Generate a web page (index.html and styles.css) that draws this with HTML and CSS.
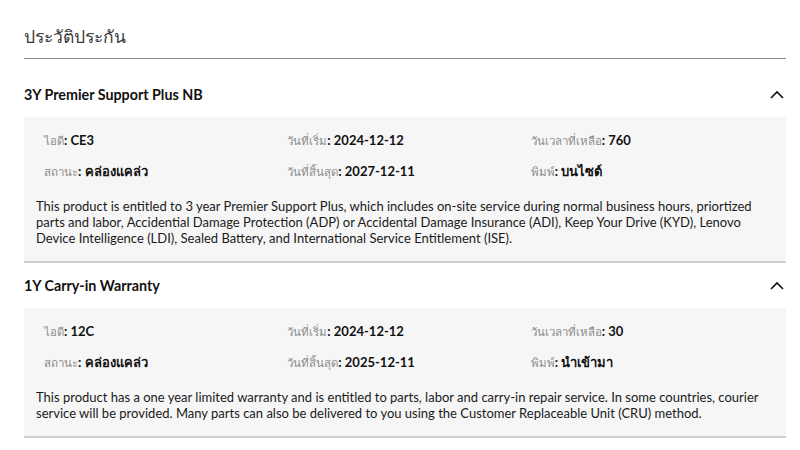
FILE: index.html
```html
<!DOCTYPE html>
<html lang="th">
<head>
<meta charset="utf-8">
<link rel="stylesheet" href="styles.css">
</head>
<body>
<div class="page">
  <h1 class="title">ประวัติประกัน</h1>

  <section class="warranty first">
    <div class="wheader">
      <span class="wname">3Y Premier Support Plus NB</span>
      <svg class="chev" width="14" height="9" viewBox="0 0 14 9"><path d="M1 8 L7 2 L13 8" fill="none" stroke="#111" stroke-width="1.6"/></svg>
    </div>
    <div class="wbody">
      <div class="grid">
        <div class="item"><span class="lbl">ไอดี</span><span class="val">: CE3</span></div>
        <div class="item"><span class="lbl">วันที่เริ่ม</span><span class="val">: 2024-12-12</span></div>
        <div class="item"><span class="lbl">วันเวลาที่เหลือ</span><span class="val">: 760</span></div>
        <div class="item"><span class="lbl">สถานะ</span><span class="val">: คล่องแคล่ว</span></div>
        <div class="item"><span class="lbl">วันที่สิ้นสุด</span><span class="val">: 2027-12-11</span></div>
        <div class="item"><span class="lbl">พิมพ์</span><span class="val">: บนไซต์</span></div>
      </div>
      <p class="desc">This product is entitled to 3 year Premier Support Plus, which includes on-site service during normal business hours, priortized parts and labor, Accidential Damage Protection (ADP) or Accidental Damage Insurance (ADI), Keep Your Drive (KYD), Lenovo Device Intelligence (LDI), Sealed Battery, and International Service Entitlement (ISE).</p>
    </div>
  </section>

  <section class="warranty">
    <div class="wheader">
      <span class="wname">1Y Carry-in Warranty</span>
      <svg class="chev" width="14" height="9" viewBox="0 0 14 9"><path d="M1 8 L7 2 L13 8" fill="none" stroke="#111" stroke-width="1.6"/></svg>
    </div>
    <div class="wbody">
      <div class="grid">
        <div class="item"><span class="lbl">ไอดี</span><span class="val">: 12C</span></div>
        <div class="item"><span class="lbl">วันที่เริ่ม</span><span class="val">: 2024-12-12</span></div>
        <div class="item"><span class="lbl">วันเวลาที่เหลือ</span><span class="val">: 30</span></div>
        <div class="item"><span class="lbl">สถานะ</span><span class="val">: คล่องแคล่ว</span></div>
        <div class="item"><span class="lbl">วันที่สิ้นสุด</span><span class="val">: 2025-12-11</span></div>
        <div class="item"><span class="lbl">พิมพ์</span><span class="val">: นำเข้ามา</span></div>
      </div>
      <p class="desc">This product has a one year limited warranty and is entitled to parts, labor and carry-in repair service. In some countries, courier service will be provided. Many parts can also be delivered to you using the Customer Replaceable Unit (CRU) method.</p>
    </div>
  </section>
</div>
</body>
</html>
```

FILE: styles.css
```css
html, body {
  margin: 0;
  padding: 0;
  background: #fff;
}
body {
  font-family: Lato, "Noto Sans", "DejaVu Sans", sans-serif;
  color: #1a1a1a;
}
.page {
  padding: 0 14px 0 24px;
}
.title {
  margin: 23px 0 0;
  font-size: 17.5px;
  line-height: 28px;
  font-weight: 400;
  color: #3a3a3a;
  padding-bottom: 7px;
  border-bottom: 1px solid #8a8a8a;
}
.warranty.first {
  margin-top: 13px;
}
.wheader {
  height: 45px;
  display: flex;
  align-items: center;
  justify-content: space-between;
}
.wname {
  font-size: 14.3px;
  font-weight: 700;
  color: #111;
}
.chev {
  margin-right: 2px;
}
.wbody {
  background: #f6f6f6;
  border-bottom: 2px solid #cfcfcf;
  padding: 12px 12px 15px 12px;
}
.grid {
  display: grid;
  grid-template-columns: repeat(3, 1fr);
  row-gap: 11px;
  padding-left: 8px;
}
.item {
  line-height: 20px;
  height: 20px;
  white-space: nowrap;
}
.lbl {
  font-size: 11.5px;
  color: #8c8c8c;
}
.val {
  font-size: 13px;
  font-weight: 700;
  color: #111;
}
.desc {
  margin: 18px 0 0;
  font-size: 13px;
  line-height: 16px;
  color: #1a1a1a;
}
```
